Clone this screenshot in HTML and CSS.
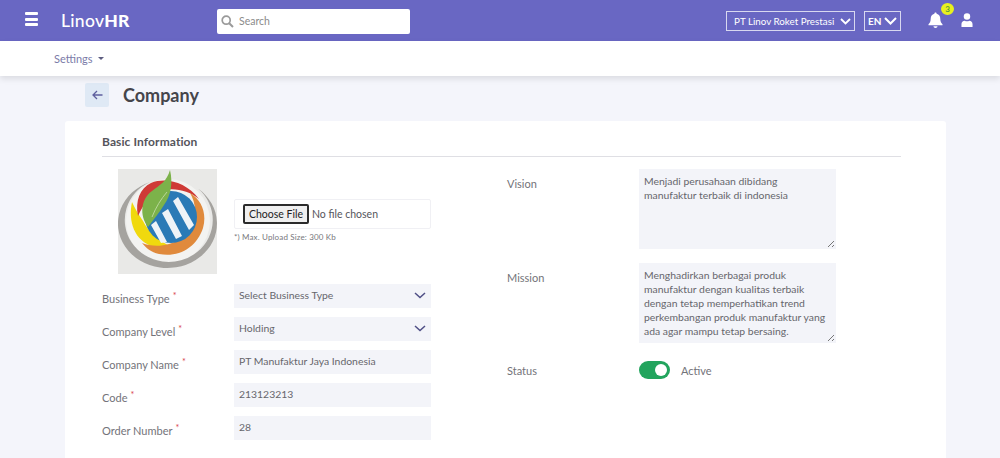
FILE: index.html
```html
<!DOCTYPE html>
<html lang="en">
<head>
<meta charset="utf-8">
<title>Company</title>
<link rel="stylesheet" href="styles.css">
</head>
<body>
<header class="topbar">
  <div class="burger"><span></span><span></span><span></span></div>
  <div class="brand">Linov<b>HR</b></div>
  <div class="search">
    <svg width="13" height="13" viewBox="0 0 13 13"><circle cx="5.2" cy="5.2" r="4" fill="none" stroke="#9a9a9a" stroke-width="1.7"/><path d="M8.2 8.2l3.8 3.8" stroke="#9a9a9a" stroke-width="2"/></svg>
    <span>Search</span>
  </div>
  <div class="spacer"></div>
  <div class="pick pick-company"><span>PT Linov Roket Prestasi</span><svg width="11" height="7" viewBox="0 0 11 7"><path d="M1 1l4.500 4.500L10 1" fill="none" stroke="#fff" stroke-width="1.800"/></svg></div>
  <div class="pick pick-lang"><span>EN</span><svg width="13" height="8" viewBox="0 0 13 8"><path d="M1 1l5.500 5.500L12 1" fill="none" stroke="#fff" stroke-width="2"/></svg></div>
  <div class="bell">
    <svg width="15" height="16" viewBox="0 0 15 16"><path d="M7.500 0.500c.7 0 1.100.5 1.100 1.200 2.500.5 3.700 2.500 3.700 5 0 3 1 4.300 2.200 5.500v1H.5v-1c1.200-1.200 2.200-2.500 2.200-5.500 0-2.500 1.200-4.500 3.700-5 0-.7.4-1.200 1.100-1.200zM5.500 14.300h4c0 1-.9 1.700-2 1.700s-2-.7-2-1.700z" fill="#fff"/></svg>
    <span class="badge">3</span>
  </div>
  <svg class="user" width="12" height="14" viewBox="0 0 13 15"><circle cx="6.500" cy="3.800" r="3.500" fill="#fff"/><path d="M0.500 15v-3c0-2.200 1.500-3.800 3.500-3.800 .8.500 1.600.7 2.500.7s1.700-.2 2.500-.7c2 0 3.500 1.600 3.500 3.800v3z" fill="#fff"/></svg>
</header>
<nav class="subnav"><span>Settings</span><i class="caret"></i></nav>
<main class="page">
  <div class="page-title">
    <div class="back"><svg width="11" height="10" viewBox="0 0 11 10"><path d="M5 1L1 5l4 4M1 5h9.500" fill="none" stroke="#5f5f9e" stroke-width="1.300"/></svg></div>
    <h1>Company</h1>
  </div>
  <section class="card">
    <h2>Basic Information</h2>
    <div class="columns">
      <div class="col-left">
        <div class="logo-row">
          <svg class="logo" viewBox="0 0 99 105">
            <rect width="99" height="105" fill="#e9e9e7"/>
            <circle cx="50" cy="52" r="42" fill="#f3f3f1"/>
            <path d="M32 13A49.500 44.400 0 1 0 80 19.600A44 42 0 1 1 32 13Z" fill="#a5a39f"/>
            <path d="M14 33C10 52 16 72 36 78c6 2 12 2 18 0C40 72 30 62 25 52c-4-6-8-12-11-19z" fill="#f0d90e"/>
            <path d="M20 47C17 32 22 19 33 14c15-6 35-1 48 16C70 21 55 18 42 22 32 26 25 36 20 47z" fill="#cf3a36"/>
            <path d="M72 24c12 7 17 21 13 35-6 19-24 30-44 26-8-2-13-6-17-11 8 3 17 4 27 1 17-5 26-18 26-33 0-7-2-13-5-18z" fill="#e08a3c"/>
            <circle cx="53" cy="48" r="26" fill="#2a7ab6"/>
            <path d="M55 32l5-4 16 28-5 5zM44 44l6-4 14 27-6 3zM33 56l5-4 11 21-6 1z" fill="#eef3f7"/>
            <path d="M30 58C21 46 23 30 34 22 42 16 49 12 52 1c3 13 1 25-6 35-5 8-10 14-16 22z" fill="#7cb24a"/>
            <path d="M34 48C38 38 43 30 49 23" fill="none" stroke="#b9d79a" stroke-width="1"/>
          </svg>
          <div class="upload">
            <div class="file-box"><button class="file-btn" type="button">Choose File</button><span>No file chosen</span></div>
            <p class="hint">*) Max. Upload Size: 300 Kb</p>
          </div>
        </div>
        <div class="field"><label>Business Type<sup>*</sup></label><div class="control">Select Business Type<svg width="12" height="7" viewBox="0 0 12 7"><path d="M1 1l5 4.500L11 1" fill="none" stroke="#4f4f86" stroke-width="1.500"/></svg></div></div>
        <div class="field"><label>Company Level<sup>*</sup></label><div class="control">Holding<svg width="12" height="7" viewBox="0 0 12 7"><path d="M1 1l5 4.500L11 1" fill="none" stroke="#4f4f86" stroke-width="1.500"/></svg></div></div>
        <div class="field"><label>Company Name<sup>*</sup></label><div class="control">PT Manufaktur Jaya Indonesia</div></div>
        <div class="field"><label>Code<sup>*</sup></label><div class="control">213123213</div></div>
        <div class="field"><label>Order Number<sup>*</sup></label><div class="control">28</div></div>
      </div>
      <div class="col-right">
        <div class="area-row"><label>Vision</label><div class="area area-tall">Menjadi perusahaan dibidang<br>manufaktur terbaik di indonesia<svg class="grip" width="8" height="8" viewBox="0 0 8 8"><path d="M1 7l6-6M5 7l2-2" stroke="#777" stroke-width="1"/></svg></div></div>
        <div class="area-row"><label>Mission</label><div class="area">Menghadirkan berbagai produk<br>manufaktur dengan kualitas terbaik<br>dengan tetap memperhatikan trend<br>perkembangan produk manufaktur yang<br>ada agar mampu tetap bersaing.<svg class="grip" width="8" height="8" viewBox="0 0 8 8"><path d="M1 7l6-6M5 7l2-2" stroke="#777" stroke-width="1"/></svg></div></div>
        <div class="status-row"><label>Status</label><div class="toggle"><span></span></div><span class="active">Active</span></div>
      </div>
    </div>
  </section>
</main>
</body>
</html>
```
FILE: styles.css
```css
* { box-sizing: border-box; }
html, body { margin: 0; height: 458px; overflow: hidden; }
body { background: #f4f5fb; font-family: "Lato", "Open Sans", sans-serif; color: #737379; }

.topbar { height: 41px; background: #6967c3; display: flex; align-items: center; padding-left: 25px; color: #fff; }
.burger { width: 13px; display: flex; flex-direction: column; gap: 2.500px; margin-top: -3px; }
.burger span { height: 3px; background: #fff; border-radius: 1px; }
.brand { font-size: 17.500px; font-weight: 500; margin-left: 23px; letter-spacing: 0.300px; width: 156px; }
.brand b { font-weight: 900; letter-spacing: 0; }
.search { width: 193px; height: 25px; background: #fff; border-radius: 2px; display: flex; align-items: center; gap: 5px; padding-left: 4px; color: #8b8b8b; font-size: 10.500px; margin-top: 1px; }
.spacer { flex: 1; }
.pick { height: 20px; border: 1px solid #d8d8f0; display: flex; align-items: center; font-size: 10px; justify-content: space-between; margin-top: 1px; }
.pick-company { width: 129px; padding: 0 3px 0 7px; margin-right: 9px; font-size: 9.800px; }
.pick-lang { width: 37px; padding: 0 3px 0 3px; margin-right: 27px; font-weight: 700; }
.bell { position: relative; width: 15px; height: 16px; margin-right: 18px; margin-top: -2px; }
.bell svg { display: block; }
.badge { position: absolute; left: 13px; top: -9px; width: 13px; height: 12px; border-radius: 50%; background: #e8f01e; color: #5a9a3a; font-size: 8px; line-height: 12px; text-align: center; font-weight: 700; }
.user { margin-right: 27px; margin-top: -1px; }

.subnav { height: 35px; background: #fff; box-shadow: 0 3px 6px rgba(0,0,0,0.1); display: flex; align-items: center; padding-left: 54px; font-size: 11px; color: #7b7ba8; position: relative; }
.caret { width: 0; height: 0; border: 3px solid transparent; border-top: 3px solid #5d5d80; border-bottom: 0; margin-left: 5px; }

.page { padding: 7px 54px 0 65px; }
.page-title { display: flex; align-items: center; height: 24px; padding-left: 20px; margin-bottom: 14px; }
.back { width: 24px; height: 24px; background: #dfe9f5; border-radius: 2px; display: flex; align-items: center; justify-content: center; }
h1 { font-size: 18px; font-weight: 700; color: #45454b; margin: 0 0 0 14px; }

.card { background: #fff; border-radius: 3px; height: 340px; padding: 0 45px 0 37px; }
h2 { margin: 0; height: 36px; border-bottom: 1px solid #dfdfe4; font-size: 12px; font-weight: 700; color: #55555b; line-height: 42px; letter-spacing: 0.100px; }
.columns { display: grid; grid-template-columns: 405px 1fr; }

.logo-row { display: flex; align-items: center; padding: 12px 0 0 16px; margin-bottom: 6px; }
.logo { width: 99px; height: 105px; flex: none; }
.upload { margin-left: 17px; margin-top: -3px; }
.file-box { width: 197px; height: 30px; background: #fff; border: 1px solid #f0f0f4; border-radius: 2px; display: flex; align-items: center; padding-left: 8px; gap: 3px; font-size: 10.500px; color: #55555b; }
.file-btn { width: 66px; height: 20px; padding: 0; background: #efefef; border: 2px solid #2b2b2b; border-radius: 2px; font: 10.500px "Lato", sans-serif; color: #222; }
.hint { margin: 3px 0 0; font-size: 8px; color: #77777c; letter-spacing: 0.150px; }

.field { display: flex; height: 33px; align-items: flex-start; padding-top: 4px; }
.field label { width: 132px; font-size: 11px; line-height: 14px; padding-top: 8px; }
sup { color: #d8434b; font-size: 9px; line-height: 0; margin-left: 3px; vertical-align: 4px; }
.control { width: 197px; height: 24px; background: #f3f4f9; display: flex; align-items: center; justify-content: space-between; padding: 0 5px 2px; font-size: 10.400px; color: #66666c; }

.col-right { padding-top: 12px; }
.area-row { display: flex; height: 94px; }
.area-row label, .status-row label { width: 132px; font-size: 11px; padding-top: 8px; }
.area { position: relative; width: 197px; height: 80px; background: #f3f4f9; padding: 5px 5px; font-size: 10.400px; line-height: 14px; color: #66666c; white-space: nowrap; }
.grip { position: absolute; right: 1px; bottom: 1px; }
.status-row { display: flex; align-items: center; height: 18px; margin-top: 4px; }
.status-row label { padding-top: 0; }
.toggle { width: 31px; height: 18px; border-radius: 9px; background: #22a45d; position: relative; }
.toggle span { position: absolute; right: 3px; top: 3px; width: 12px; height: 12px; border-radius: 50%; background: #fff; }
.active { margin-left: 11px; font-size: 11px; }
```
